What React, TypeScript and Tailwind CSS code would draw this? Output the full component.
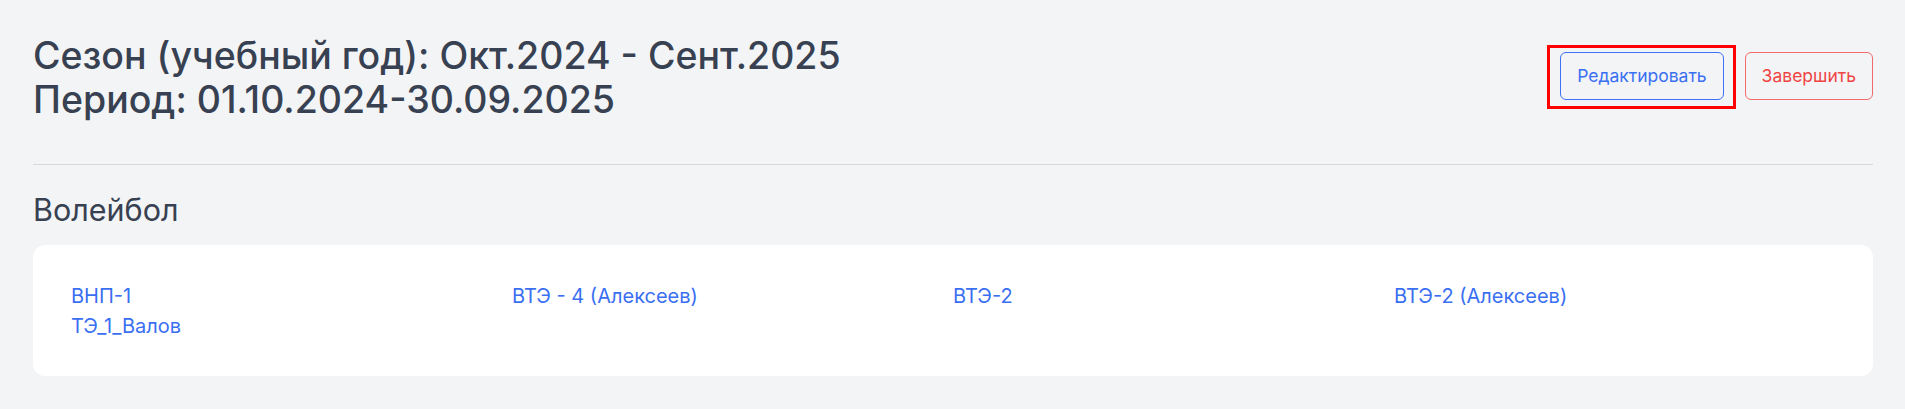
import React from "react";

const links: string[][] = [
  ["ВНП-1", "ТЭ_1_Валов"],
  ["ВТЭ - 4 (Алексеев)"],
  ["ВТЭ-2"],
  ["ВТЭ-2 (Алексеев)"],
];

export default function App() {
  return (
    <div className="min-h-screen bg-[#f3f4f6] pl-[33px] pr-[32px] pt-[34px] pb-[33px] font-['Inter','Noto_Sans',sans-serif]">
      <div className="flex items-start justify-between">
        <h1 className="text-[37.5px] leading-[44px] font-medium text-[#374151]">
          <div>Сезон (учебный год): Окт.2024 - Сент.2025</div>
          <div>Период: 01.10.2024-30.09.2025</div>
        </h1>
        <div className="mt-[18px] flex gap-[21px]">
          <div className="relative">
            <button className="h-[48px] rounded-md border border-[#3b72f6] px-4 text-[17.5px] text-[#3a6ff2]">
              Редактировать
            </button>
            <div className="pointer-events-none absolute -left-[13px] -right-[12px] -top-[7px] -bottom-[9px] border-[3px] border-[#ff0000]" />
          </div>
          <button className="h-[48px] rounded-md border border-[#f26b6b] px-4 text-[17.5px] text-[#ef4444]">
            Завершить
          </button>
        </div>
      </div>
      <div className="mt-[42px] h-px bg-[#d6d8dd]" />
      <h2 className="mt-[27px] text-[30.5px] leading-[36px] text-[#374151]">Волейбол</h2>
      <div className="mt-[17px] rounded-xl bg-white px-[38px] pt-[36px] pb-[35px]">
        <div className="grid grid-cols-4">
          {links.map((col, i) => (
            <div key={i} className="flex flex-col">
              {col.map((l) => (
                <a key={l} href="#" className="text-[20px] leading-[30px] text-[#3a6ff2]">
                  {l}
                </a>
              ))}
            </div>
          ))}
        </div>
      </div>
    </div>
  );
}
